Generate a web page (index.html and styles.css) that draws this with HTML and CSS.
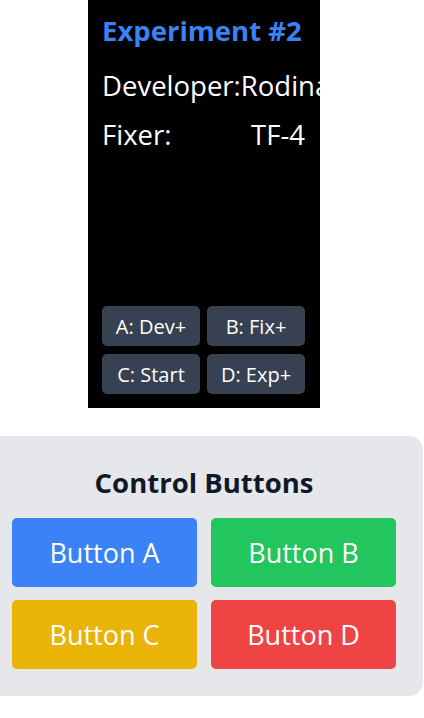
FILE: index.html
```html
<!DOCTYPE html>
<html>
<head>
<meta charset="utf-8">
<link rel="stylesheet" href="styles.css">
</head>
<body>
<div class="page">
  <div class="device">
    <div class="title">Experiment #2</div>
    <div class="row"><span>Developer:</span><span>Rodinal</span></div>
    <div class="row"><span>Fixer:</span><span>TF-4</span></div>
    <div class="spacer"></div>
    <div class="dev-buttons">
      <div class="dev-btn">A: Dev+</div>
      <div class="dev-btn">B: Fix+</div>
      <div class="dev-btn">C: Start</div>
      <div class="dev-btn">D: Exp+</div>
    </div>
  </div>
  <div class="card">
    <h2 class="card-title">Control Buttons</h2>
    <div class="ctrl-grid">
      <button class="ctrl blue">Button A</button>
      <button class="ctrl green">Button B</button>
      <button class="ctrl yellow">Button C</button>
      <button class="ctrl red">Button D</button>
    </div>
  </div>
</div>
</body>
</html>
```
FILE: styles.css
```css
html, body {
  margin: 0;
  padding: 0;
  background: #ffffff;
  font-family: "Open Sans", "Noto Sans", sans-serif;
  overflow: hidden;
}
.page {
  width: 408px;
  display: flex;
  flex-direction: column;
  align-items: center;
}
.device {
  width: 232px;
  height: 408px;
  box-sizing: border-box;
  background: #000000;
  padding: 12px 15px 14px 14px;
  display: flex;
  flex-direction: column;
  overflow: hidden;
  color: #ffffff;
}
.title {
  color: #3b82f6;
  font-weight: 700;
  font-size: 27.5px;
  line-height: 38px;
  white-space: nowrap;
  margin-bottom: 17px;
}
.row {
  display: flex;
  justify-content: space-between;
  font-size: 27.5px;
  line-height: 38px;
  white-space: nowrap;
  margin-bottom: 11px;
}
.spacer { flex: 1; }
.dev-buttons {
  display: grid;
  grid-template-columns: 98px 98px;
  column-gap: 7px;
  row-gap: 8px;
}
.dev-btn {
  background: #374151;
  border-radius: 5px;
  height: 40px;
  display: flex;
  align-items: center;
  justify-content: center;
  font-size: 20px;
  color: #ffffff;
}
.card {
  margin-top: 28px;
  flex: none;
  width: 438px;
  box-sizing: border-box;
  background: #e5e7eb;
  border-radius: 14px;
  padding: 29px 27px 27px;
}
.card-title {
  margin: 0 0 17px;
  text-align: center;
  font-size: 27.5px;
  line-height: 36px;
  font-weight: 700;
  color: #111827;
}
.ctrl-grid {
  display: grid;
  grid-template-columns: 1fr 1fr;
  column-gap: 14px;
  row-gap: 13px;
}
.ctrl {
  border: none;
  border-radius: 5px;
  height: 69px;
  font-family: inherit;
  font-size: 27px;
  color: #ffffff;
  padding: 0;
}
.blue { background: #3b82f6; }
.green { background: #22c55e; }
.yellow { background: #eab308; }
.red { background: #ef4444; }
```
